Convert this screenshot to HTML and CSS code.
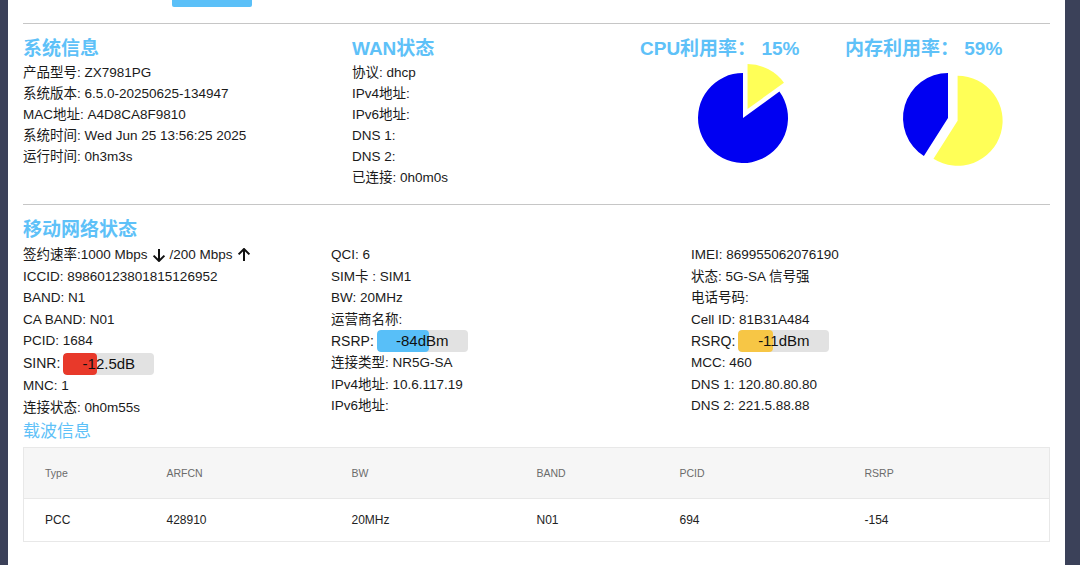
FILE: index.html
```html
<!DOCTYPE html>
<html lang="zh-CN">
<head>
<meta charset="utf-8">
<title>状态</title>
<link rel="stylesheet" href="styles.css">
</head>
<body>
<div class="frame">
  <div class="side-left"></div>
  <main class="main">
    <div class="top-strip"><div class="top-btn"></div></div>
    <div class="rule"></div>

    <section class="sys">
      <div class="col">
        <h2 class="head">系统信息</h2>
        <div class="line">产品型号: ZX7981PG</div>
        <div class="line">系统版本: 6.5.0-20250625-134947</div>
        <div class="line">MAC地址: A4D8CA8F9810</div>
        <div class="line">系统时间: Wed Jun 25 13:56:25 2025</div>
        <div class="line">运行时间: 0h3m3s</div>
      </div>
      <div class="col">
        <h2 class="head">WAN状态</h2>
        <div class="line">协议: dhcp</div>
        <div class="line">IPv4地址:</div>
        <div class="line">IPv6地址:</div>
        <div class="line">DNS 1:</div>
        <div class="line">DNS 2:</div>
        <div class="line">已连接: 0h0m0s</div>
      </div>
      <div class="pies">
        <div class="pie-block">
          <h2 class="head">CPU利用率：&nbsp;15%</h2>
          <svg class="pie" viewBox="0 0 110 110" width="110" height="110">
            <path d="M55 55 L91.41 28.55 A45 45 0 1 1 55 10 Z" fill="#0000f2"/>
            <path d="M59.54 46.09 L59.54 1.09 A45 45 0 0 1 95.95 19.64 Z" fill="#ffff57"/>
          </svg>
        </div>
        <div class="pie-block">
          <h2 class="head">内存利用率：&nbsp;59%</h2>
          <svg class="pie" viewBox="0 0 110 110" width="110" height="110">
            <path d="M64.6 57.79 L64.6 12.79 A45 45 0 1 1 40.49 95.78 Z" fill="#ffff57"/>
            <path d="M55 55 L30.89 92.99 A45 45 0 0 1 55 10 Z" fill="#0000f2"/>
          </svg>
        </div>
      </div>
    </section>

    <div class="rule"></div>

    <section class="mobile">
      <h2 class="head head-mobile">移动网络状态</h2>
      <div class="mgrid">
        <div class="mcol">
          <div class="row">签约速率:1000 Mbps <svg class="arr" viewBox="0 0 14 14" width="14" height="14"><path d="M7 1V13M1.6 7.6L7 13L12.4 7.6" fill="none" stroke="#111" stroke-width="2"/></svg> /200 Mbps <svg class="arr" viewBox="0 0 14 14" width="14" height="14"><path d="M7 13V1M1.6 6.4L7 1L12.4 6.4" fill="none" stroke="#111" stroke-width="2"/></svg></div>
          <div class="row">ICCID: 89860123801815126952</div>
          <div class="row">BAND: N1</div>
          <div class="row">CA BAND: N01</div>
          <div class="row">PCID: 1684</div>
          <div class="row row-bar row-bar-gap"><span class="bar-label">SINR:</span><span class="meter"><span class="meter-fill fill-red" style="width:37%"></span><span class="meter-text">-12.5dB</span></span></div>
          <div class="row">MNC: 1</div>
          <div class="row">连接状态: 0h0m55s</div>
        </div>
        <div class="mcol">
          <div class="row">QCI: 6</div>
          <div class="row">SIM卡 : SIM1</div>
          <div class="row">BW: 20MHz</div>
          <div class="row">运营商名称:</div>
          <div class="row row-bar"><span class="bar-label">RSRP:</span><span class="meter"><span class="meter-fill fill-blue" style="width:57%"></span><span class="meter-text">-84dBm</span></span></div>
          <div class="row">连接类型: NR5G-SA</div>
          <div class="row">IPv4地址: 10.6.117.19</div>
          <div class="row">IPv6地址:</div>
        </div>
        <div class="mcol">
          <div class="row">IMEI: 869955062076190</div>
          <div class="row">状态: 5G-SA 信号强</div>
          <div class="row">电话号码:</div>
          <div class="row">Cell ID: 81B31A484</div>
          <div class="row row-bar"><span class="bar-label">RSRQ:</span><span class="meter"><span class="meter-fill fill-yellow" style="width:38%"></span><span class="meter-text">-11dBm</span></span></div>
          <div class="row">MCC: 460</div>
          <div class="row">DNS 1: 120.80.80.80</div>
          <div class="row">DNS 2: 221.5.88.88</div>
        </div>
      </div>

      <h3 class="head-carrier">载波信息</h3>
      <table class="carrier">
        <colgroup>
          <col class="c1"><col class="c2"><col class="c3"><col class="c4"><col class="c5"><col class="c6">
        </colgroup>
        <thead>
          <tr><th>Type</th><th>ARFCN</th><th>BW</th><th>BAND</th><th>PCID</th><th>RSRP</th></tr>
        </thead>
        <tbody>
          <tr><td>PCC</td><td>428910</td><td>20MHz</td><td>N01</td><td>694</td><td>-154</td></tr>
        </tbody>
      </table>
    </section>
  </main>
  <div class="side-right"></div>
</div>
</body>
</html>
```

FILE: styles.css
```css
* { box-sizing: border-box; }

html, body {
  margin: 0;
  padding: 0;
  height: 100%;
  background: #ffffff;
}

body {
  font-family: "Liberation Sans", "Noto Sans CJK SC", sans-serif;
  color: #1a1a1a;
  font-size: 13.5px;
  overflow: hidden;
}

.frame {
  display: flex;
  height: 565px;
}

.side-left {
  width: 8px;
  background: #3b4159;
  flex: none;
}

.side-right {
  width: 15px;
  background: #3b4159;
  flex: none;
}

.main {
  flex: 1;
  padding: 0 15px;
  min-width: 0;
}

.top-strip {
  height: 23px;
}

.top-btn {
  margin-left: 149px;
  width: 80px;
  height: 7px;
  background: #5bc0f8;
  border-radius: 0 0 2px 2px;
}

.rule {
  height: 1px;
  background: #c6c6c6;
}

.head {
  margin: 0;
  font-size: 19px;
  font-weight: 600;
  line-height: 26px;
  color: #5ec1f8;
  white-space: nowrap;
}

/* system section */
.sys {
  display: grid;
  grid-template-columns: 329px 288px 1fr;
  padding-top: 11.5px;
  padding-bottom: 16.5px;
}

.line {
  height: 21px;
  line-height: 21px;
  white-space: nowrap;
}

.pies {
  display: flex;
}

.pie-block {
  width: 205px;
}

.pie {
  display: block;
  margin: 1px auto 0;
}

/* mobile section */
.mobile {
  padding-top: 12px;
}

.head-mobile {
  margin-bottom: 1.25px;
}

.mgrid {
  display: grid;
  grid-template-columns: 308px 360px 1fr;
}

.row {
  height: 21.5px;
  line-height: 21.5px;
  white-space: nowrap;
  display: flex;
  align-items: center;
}

.arr {
  display: inline-block;
  margin: 0 4px;
  flex: none;
}

.row-bar {
  height: 22px;
}

.row-bar-gap {
  margin-top: 1.25px;
}

.bar-label {
  font-size: 14px;
  margin-right: 3px;
}

.meter {
  position: relative;
  display: inline-block;
  width: 91px;
  height: 22px;
  background: #e2e2e2;
  border-radius: 4px;
  overflow: hidden;
}

.meter-fill {
  position: absolute;
  left: 0;
  top: 0;
  bottom: 0;
  border-radius: 4px;
}

.fill-red { background: #e8392a; }
.fill-blue { background: #58bff8; }
.fill-yellow { background: #f7c645; }

.meter-text {
  position: absolute;
  left: 0;
  right: 0;
  top: 0;
  bottom: 0;
  text-align: center;
  line-height: 22px;
  font-size: 15px;
  color: #111;
}

.head-carrier {
  margin: 2px 0 0;
  font-size: 17px;
  font-weight: 400;
  line-height: 24px;
  color: #5ec1f8;
}

.carrier {
  margin-top: 3px;
  width: 100%;
  table-layout: fixed;
  border-collapse: collapse;
  border: 1px solid #e8e8e8;
}

.c1 { width: 122px; }
.c2 { width: 185px; }
.c3 { width: 185px; }
.c4 { width: 143px; }
.c5 { width: 185px; }
.c6 { width: auto; }

.carrier th {
  height: 51px;
  background: #f6f6f6;
  border-bottom: 1px solid #e8e8e8;
  text-align: left;
  font-weight: 400;
  font-size: 10.5px;
  color: #6b6b6b;
  padding: 0 0 0 21px;
}

.carrier td {
  height: 43px;
  text-align: left;
  font-size: 12px;
  color: #222;
  padding: 0 0 0 21px;
}
```
